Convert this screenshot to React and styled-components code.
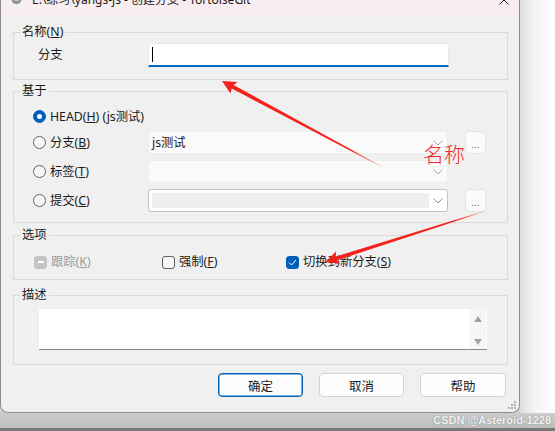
import React from 'react'
import styled, { createGlobalStyle } from 'styled-components'

const Global = createGlobalStyle`
  html, body { margin: 0; padding: 0; background: #fff; }
  * { box-sizing: border-box; }
`

const font = `"Noto Sans", "Noto Sans CJK SC", sans-serif`

const Screen = styled.div`
  position: relative;
  width: 555px;
  height: 431px;
  overflow: hidden;
  display: flex;
  flex-direction: column;
  font-family: ${font};
  font-size: 12.3px;
  color: #1b1b1b;
  background: #fff;
`

const Top = styled.div`
  display: flex;
  height: 413px;
  background: #cfcfcf;
`

const RightShade = styled.div`
  flex: 1;
  background: linear-gradient(90deg, #dedede 0%, #f4f4f4 40%, #fdfdfd 100%);
`

const BottomBand = styled.div`
  height: 15px;
  background: linear-gradient(180deg, #cdcdcd 0%, #bdbdbd 100%);
`

const DarkLine = styled.div`
  height: 3px;
  background: #787878;
`

const Window = styled.div`
  position: relative;
  width: 520px;
  height: 430px;
  margin-top: -17px;
  background: #f0f0f0;
  border: 1px solid #8e8e8e;
  border-top: none;
  border-radius: 0 0 8px 8px;
  display: flex;
  flex-direction: column;
`

const TitleBar = styled.div`
  height: 33px;
  flex-shrink: 0;
  display: flex;
  align-items: center;
  padding-left: 10px;
  background: #f8eef0;
`

const TitleText = styled.span`
  margin-left: 10px;
  font-size: 12px;
  line-height: 16px;
  color: #1a1a1a;
  white-space: nowrap;
`

const Spacer = styled.div`
  flex: 1;
`

const Body = styled.div`
  padding: 8px 11px 0 12px;
  display: flex;
  flex-direction: column;
`

const Group = styled.fieldset`
  margin: ${p => p.$mt || 0}px 0 0 0;
  min-width: 0;
  border: 1px solid #dadada;
  padding: 0;
`

const Content = styled.div`
  padding: ${p => p.$pad};
`

const Legend = styled.legend`
  margin-left: 6px;
  padding: 0 2px;
  font-size: 12.3px;
  line-height: 16px;
  color: #1b1b1b;
`

const NameRow = styled.div`
  display: flex;
  align-items: center;
  height: 24px;
`

const FieldLabel = styled.span`
  width: 110px;
  line-height: 16px;
`

const TextBox = styled.div`
  width: 301px;
  height: 24px;
  background: #fff;
  border: 1px solid #e8e8e8;
  border-bottom: 2px solid #0067c0;
  border-radius: 3px 3px 0 0;
  display: flex;
  align-items: center;
`

const Caret = styled.span`
  width: 1px;
  height: 15px;
  margin-left: 3px;
  background: #000;
`

const OptionRow = styled.div`
  display: flex;
  align-items: center;
  height: 23px;
  margin-top: ${p => p.$mt || 0}px;
`

const Choice = styled.label`
  display: flex;
  align-items: center;
  gap: 4px;
  width: ${p => (p.$w ? `${p.$w}px` : 'auto')};
  flex-shrink: 0;
  white-space: nowrap;
  line-height: 16px;
  color: ${p => (p.$disabled ? '#9b9b9b' : '#1b1b1b')};
`

const ChoiceText = styled.span`
  white-space: nowrap;
`

const Radio = styled.span`
  width: 13px;
  height: 13px;
  flex-shrink: 0;
  border-radius: 50%;
  display: flex;
  align-items: center;
  justify-content: center;
  background: ${p => (p.$on ? '#005fb8' : '#f7f7f7')};
  border: 1px solid ${p => (p.$on ? '#005fb8' : '#626262')};

  &::after {
    content: '';
    display: ${p => (p.$on ? 'block' : 'none')};
    width: 5px;
    height: 5px;
    border-radius: 50%;
    background: #fff;
  }
`

const Combo = styled.div`
  width: 300px;
  height: 23px;
  display: flex;
  align-items: center;
  padding: 0 4px 0 3px;
  gap: 4px;
  border-radius: 3px;
  background: ${p => (p.$active ? '#fff' : '#fafafa')};
  border: 1px solid ${p => (p.$active ? '#c2c2c2' : '#ededed')};
  color: #1b1b1b;
  line-height: 16px;
`

const ComboText = styled.span`
  flex: 1;
`

const ComboField = styled.span`
  flex: 1;
  height: 15px;
  background: #efefef;
`

const Ellipsis = styled.div`
  width: 21px;
  height: 23px;
  margin-left: 17px;
  border: 1px solid #e4e4e4;
  border-radius: 4px;
  background: #fbfbfb;
  color: #555;
  font-size: 9px;
  letter-spacing: 0.5px;
  display: flex;
  align-items: center;
  justify-content: center;
  padding-top: 3px;
`

const CheckGrid = styled.div`
  display: grid;
  grid-template-columns: 128px 124px auto;
  height: 16px;
  align-items: center;
`

const Check = styled.span`
  width: 13px;
  height: 13px;
  flex-shrink: 0;
  border-radius: 3px;
  display: flex;
  align-items: center;
  justify-content: center;
  background: ${p => ({ on: '#005fb8', mixed: '#c4c4c4', off: '#f8f8f8' }[p.$state])};
  border: 1px solid ${p => ({ on: '#005fb8', mixed: '#c4c4c4', off: '#5f5f5f' }[p.$state])};
`

const Dash = styled.span`
  width: 6px;
  height: 2px;
  background: #fff;
`

const Memo = styled.div`
  width: 448px;
  height: 41px;
  background: #fff;
  border-bottom: 1px solid #878787;
  display: flex;
  justify-content: flex-end;
  padding: 0 1px 0 0;
`

const ScrollBar = styled.div`
  width: 16px;
  display: flex;
  flex-direction: column;
  justify-content: space-between;
  align-items: center;
  padding: 7px 0 4px;
  background: #f6f6f6;
`

const ButtonRow = styled.div`
  display: flex;
  justify-content: flex-end;
  gap: 16px;
  margin-top: 8px;
  padding-right: 2px;
`

const Button = styled.div`
  width: ${p => p.$w || 85}px;
  height: 24px;
  display: flex;
  align-items: center;
  justify-content: center;
  border-radius: 4px;
  background: #fdfdfd;
  border: 1px solid ${p => (p.$primary ? '#0063b8' : '#d3d3d3')};
  box-shadow: ${p => (p.$primary ? 'inset 0 0 0 0.5px #0063b8' : 'none')};
  font-size: 12.5px;
  color: #1b1b1b;
`

const Grip = styled.svg`
  position: absolute;
  right: 3px;
  bottom: 3px;
`

const Watermark = styled.div`
  position: absolute;
  right: 4px;
  bottom: 5px;
  font-family: "Liberation Sans", Arial, sans-serif;
  font-size: 11px;
  font-weight: bold;
  color: rgba(255, 255, 255, 0.92);
  text-shadow: 0 0 1px #8a8a8a, 0 0 1px #8a8a8a;
  white-space: nowrap;
`

const Note = styled.div`
  position: absolute;
  left: 423px;
  top: 140px;
  font-family: "Noto Sans CJK SC", sans-serif;
  font-size: 21px;
  font-weight: 300;
  line-height: 26px;
  color: #f4282a;
`

const Overlay = styled.svg`
  position: absolute;
  left: 0;
  top: 0;
  pointer-events: none;
`

const Chevron = ({ color = '#a5a5a5' }) => (
  <svg width="10" height="6" viewBox="0 0 10 6">
    <path d="M0.5 0.5 L5 5 L9.5 0.5" fill="none" stroke={color} strokeWidth="1" />
  </svg>
)

const Arrow = ({ points, id, x1, y1, x2, y2 }) => (
  <>
    <defs>
      <linearGradient id={id} gradientUnits="userSpaceOnUse" x1={x1} y1={y1} x2={x2} y2={y2}>
        <stop offset="0" stopColor="#f5211b" />
        <stop offset="0.8" stopColor="#f5211b" />
        <stop offset="1" stopColor="#f5211b" stopOpacity="0.15" />
      </linearGradient>
    </defs>
    <polygon points={points} fill={`url(#${id})`} />
  </>
)

const App = () => {
  return (
    <>
      <Global />
      <Screen>
        <Top>
          <Window>
            <TitleBar>
              <svg width="11" height="10" viewBox="0 0 11 10">
                <ellipse cx="5.5" cy="5" rx="5" ry="4" fill="#8d939a" />
                <ellipse cx="5.5" cy="4" rx="3" ry="2" fill="#c5cad0" />
              </svg>
              <TitleText>E:\练习\yangs-js - 创建分支 - TortoiseGit</TitleText>
              <Spacer />
              <svg width="10" height="10" viewBox="0 0 10 10" style={{ marginRight: 10 }}>
                <path d="M0.5 0.5 L9.5 9.5 M9.5 0.5 L0.5 9.5" stroke="#1a1a1a" strokeWidth="1" />
              </svg>
            </TitleBar>
            <Body>
              <Group>
                <Legend>名称(<u>N</u>)</Legend>
                <Content $pad="3px 0 12px 24px">
                  <NameRow>
                    <FieldLabel>分支</FieldLabel>
                    <TextBox>
                      <Caret />
                    </TextBox>
                  </NameRow>
                </Content>
              </Group>

              <Group $mt={3}>
                <Legend>基于</Legend>
                <Content $pad="6px 0 10px 19px">
                  <OptionRow>
                    <Choice>
                      <Radio $on />
                      <ChoiceText>HEAD(<u>H</u>) (js测试)</ChoiceText>
                    </Choice>
                  </OptionRow>
                  <OptionRow $mt={3}>
                    <Choice $w={115}>
                      <Radio />
                      <ChoiceText>分支(<u>B</u>)</ChoiceText>
                    </Choice>
                    <Combo>
                      <ComboText>js测试</ComboText>
                      <Chevron />
                    </Combo>
                    <Ellipsis>...</Ellipsis>
                  </OptionRow>
                  <OptionRow $mt={6}>
                    <Choice $w={115}>
                      <Radio />
                      <ChoiceText>标签(<u>T</u>)</ChoiceText>
                    </Choice>
                    <Combo>
                      <ComboText />
                      <Chevron />
                    </Combo>
                  </OptionRow>
                  <OptionRow $mt={6}>
                    <Choice $w={115}>
                      <Radio />
                      <ChoiceText>提交(<u>C</u>)</ChoiceText>
                    </Choice>
                    <Combo $active>
                      <ComboField />
                      <Chevron color="#8a8a8a" />
                    </Combo>
                    <Ellipsis>...</Ellipsis>
                  </OptionRow>
                </Content>
              </Group>

              <Group $mt={4}>
                <Legend>选项</Legend>
                <Content $pad="11px 0 9px 20px">
                  <CheckGrid>
                    <Choice $disabled>
                      <Check $state="mixed">
                        <Dash />
                      </Check>
                      <ChoiceText>跟踪(<u>K</u>)</ChoiceText>
                    </Choice>
                    <Choice>
                      <Check $state="off" />
                      <ChoiceText>强制(<u>F</u>)</ChoiceText>
                    </Choice>
                    <Choice>
                      <Check $state="on">
                        <svg width="9" height="7" viewBox="0 0 9 7">
                          <path d="M1 3.5 L3.5 6 L8 1" fill="none" stroke="#fff" strokeWidth="1" />
                        </svg>
                      </Check>
                      <ChoiceText>切换到新分支(<u>S</u>)</ChoiceText>
                    </Choice>
                  </CheckGrid>
                </Content>
              </Group>

              <Group $mt={7}>
                <Legend>描述</Legend>
                <Content $pad="6px 0 14px 25px">
                  <Memo>
                    <ScrollBar>
                      <svg width="8" height="6" viewBox="0 0 8 6">
                        <path d="M4 0 L8 6 L0 6 Z" fill="#a2a2a2" />
                      </svg>
                      <svg width="8" height="6" viewBox="0 0 8 6">
                        <path d="M0 0 L8 0 L4 6 Z" fill="#a2a2a2" />
                      </svg>
                    </ScrollBar>
                  </Memo>
                </Content>
              </Group>

              <ButtonRow>
                <Button $primary>确定</Button>
                <Button>取消</Button>
                <Button $w={86}>帮助</Button>
              </ButtonRow>
            </Body>
            <Grip width="8" height="8" viewBox="0 0 8 8">
              <g fill="#b0b0b0">
                <rect x="6" y="0" width="2" height="2" />
                <rect x="3" y="3" width="2" height="2" />
                <rect x="6" y="3" width="2" height="2" />
                <rect x="0" y="6" width="2" height="2" />
                <rect x="3" y="6" width="2" height="2" />
                <rect x="6" y="6" width="2" height="2" />
              </g>
            </Grip>
          </Window>
          <RightShade />
        </Top>
        <BottomBand />
        <DarkLine />

        <Note>名称</Note>
        <Overlay width="555" height="431" viewBox="0 0 555 431">
          <Arrow
            id="a1"
            x1="222" y1="81" x2="382" y2="167"
            points="222,81 237.5,82 233.5,84.9 382.2,166.6 381.8,167.3 231.7,88.5 230.5,93.5"
          />
          <Arrow
            id="a2"
            x1="325" y1="262" x2="485" y2="211"
            points="325,262 340.5,263.8 337,260.3 485.1,211.4 484.9,210.7 335.8,256.5 336,251.5"
          />
        </Overlay>
        <Watermark>CSDN @Asteroid-1228</Watermark>
      </Screen>
    </>
  )
}

export default App
